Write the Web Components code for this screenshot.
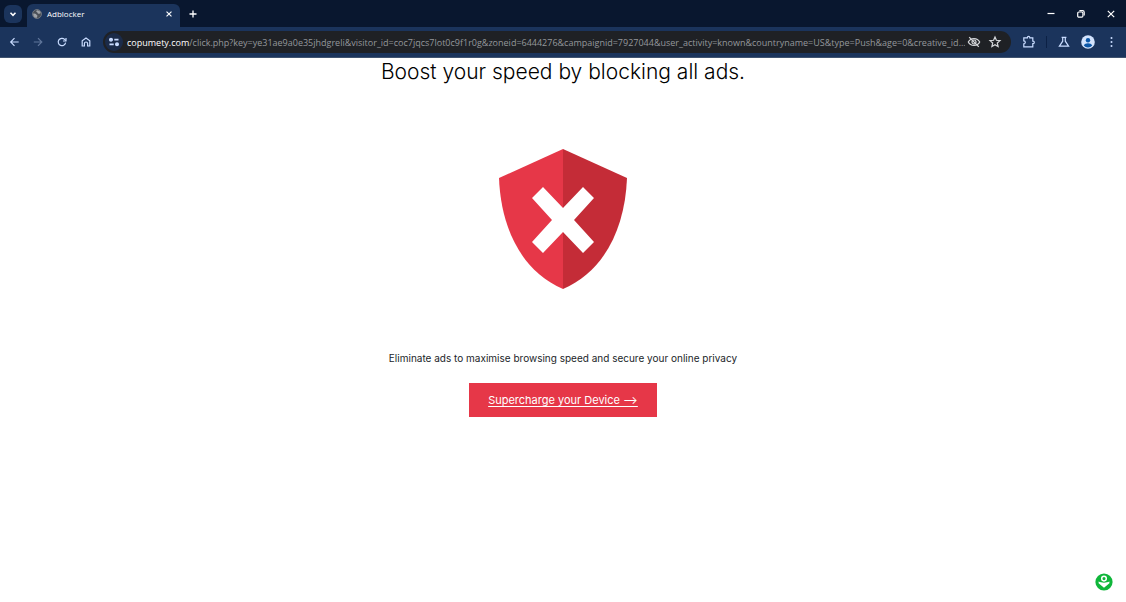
<!DOCTYPE html>
<html lang="en">
<head>
<meta charset="utf-8">
<meta name="viewport" content="width=device-width, initial-scale=1">
<title>Adblocker</title>
<style>
body {
  margin: 0;
  font-family: "Open Sans", "Noto Sans", sans-serif;
}
</style>
</head>
<body>
<browser-window>
  <tab-strip slot="chrome" tabTitle="Adblocker"></tab-strip>
  <tool-bar
    slot="chrome"
    host="copumety.com"
    path="/click.php?key=ye31ae9a0e35jhdgreli&amp;visitor_id=coc7jqcs7lot0c9f1r0g&amp;zoneid=6444276&amp;campaignid=7927044&amp;user_activity=known&amp;countryname=US&amp;type=Push&amp;age=0&amp;creative_id..."
  ></tool-bar>
  <promo-page>
    <span slot="title">Boost your speed by blocking all ads.</span>
    <span slot="text">Eliminate ads to maximise browsing speed and secure your online privacy</span>
    <span slot="action">Supercharge your Device ⟶</span>
  </promo-page>
  <help-badge></help-badge>
</browser-window>

<script>
const icons = {
  chevron: `<path d="M5.5 6.8L8 9.3l2.5-2.5" stroke-width="1.6"/>`,
  close: `<path d="M4.7 4.7l6.6 6.6M11.3 4.7l-6.6 6.6" stroke-width="1.5"/>`,
  plus: `<path d="M8 4v8M4 8h8" stroke-width="1.5"/>`,
  minimize: `<path d="M4.5 7.5h7"/>`,
  restore: `<rect x="4.7" y="6" width="5.2" height="5.2" rx="1.2"/><path d="M6.4 4.7h3.2a1.6 1.6 0 0 1 1.6 1.6v3.2"/>`,
  exit: `<path d="M4.8 4.8l6.4 6.4M11.2 4.8l-6.4 6.4"/>`,
  back: `<path d="M12.7 8H4.7M8.5 4.2L4.7 8l3.8 3.8"/>`,
  forward: `<path d="M3.8 8h8M8 4.2L11.8 8 8 11.8"/>`,
  reload: `<path d="M11.6 8.6a3.7 3.7 0 1 1-1-3.2l1.2 1.3"/><path d="M12 4v3H9"/>`,
  home: `<path d="M4.2 12V6.7L8 3.9l3.8 2.8V12H9.6V9.6a1.6 1.6 0 0 0-3.2 0V12z"/>`,
  tune: `<circle cx="5" cy="5.7" r="1.4" fill="currentColor"/><path d="M8.3 5.7h4.2M3.5 10.3h4.2" stroke-width="1.7"/><circle cx="11" cy="10.3" r="1.4" fill="currentColor"/>`,
  eye: `<path d="M2.3 8C4.6 3.4 11.4 3.4 13.7 8 11.4 12.6 4.6 12.6 2.3 8z"/><circle cx="8" cy="8" r="2"/><path d="M3.2 3.2l9.6 9.6"/>`,
  star: `<path d="M8 3l1.4 3.3 3.6.3-2.7 2.4.8 3.5L8 10.7l-3.1 1.8.8-3.5L3 6.6l3.6-.3z"/>`,
  puzzle: `<path d="M2.8 3.8h3.6v-.3a1.2 1.2 0 0 1 2.4 0v.3h3v3.4h.3a1.2 1.2 0 0 1 0 2.4h-.3v3.2h-9v-3a1.5 1.5 0 0 0 0-3z"/>`,
  flask: `<path d="M5.6 3.3h4.8M6.7 3.6v3.6l-3.3 5h9.2l-3.3-5V3.6"/>`,
  avatar: `<circle cx="8" cy="8" r="6.8" fill="#d3e3fd" stroke="none"/><circle cx="8" cy="6.2" r="2.2" fill="#0b57a8" stroke="none"/><path d="M3.8 11.4c1.2-3 7.2-3 8.4 0a5.4 5.4 0 0 1-8.4 0z" fill="#0b57a8" stroke="none"/>`,
  dots: `<g fill="currentColor" stroke="none"><circle cx="7.5" cy="4" r="1"/><circle cx="7.5" cy="8" r="1"/><circle cx="7.5" cy="12" r="1"/></g>`,
  globe: `<circle cx="8" cy="8" r="6" fill="#4a4f57" stroke="#7d838b"/><path d="M8.5 3c-2 .5-2 2-.5 2.6s.5 2 2 2 2.4-.6 3.2-1A5.6 5.6 0 0 0 8.5 3zM3 7.2c1.6.3 3.8 0 4.2 1.4s1.6.6 1.4 2-1 1.2-1.2 2.7A5.6 5.6 0 0 1 3 7.2z" fill="#a0a4a9" stroke="none"/>`,
};

class IconButton extends HTMLElement {
  constructor() {
    super();
    this.attachShadow({ mode: "open" });
  }

  connectedCallback() {
    const label = this.getAttribute("label");
    this.shadowRoot.innerHTML = `
<style>
:host {
  display: flex;
  flex: none;
  width: 24px;
  height: 24px;
}
button {
  display: grid;
  place-items: center;
  width: 100%;
  height: 100%;
  padding: 0;
  border: 0;
  border-radius: var(--radius, 50%);
  background: var(--button-bg, transparent);
  color: inherit;
}
svg {
  width: var(--icon-size, 16px);
  height: var(--icon-size, 16px);
  fill: none;
  stroke: currentColor;
  stroke-width: 1.2;
}
</style>
<button type="button" aria-label="${label}">
  <svg viewBox="0 0 16 16" aria-hidden="true">${icons[this.getAttribute("icon")]}</svg>
</button>`;
  }
}

class BrowserWindow extends HTMLElement {
  constructor() {
    super();
    this.attachShadow({ mode: "open" });
    this.shadowRoot.innerHTML = `
<style>
:host {
  display: flex;
  flex-direction: column;
  min-height: 100vh;
  background: #ffffff;
}
main {
  flex: 1;
}
</style>
<header><slot name="chrome"></slot></header>
<main><slot></slot></main>`;
  }
}

class TabStrip extends HTMLElement {
  constructor() {
    super();
    this.attachShadow({ mode: "open" });
  }

  connectedCallback() {
    this.shadowRoot.innerHTML = `
<style>
:host {
  display: flex;
  align-items: center;
  height: 27px;
  padding-left: 4px;
  background: #09172f;
  color: #ffffff;
}
.search {
  width: 18px;
  height: 18px;
  --radius: 6px;
  --button-bg: #1b345c;
}
.tab {
  display: flex;
  align-items: center;
  align-self: flex-end;
  gap: 4px;
  box-sizing: border-box;
  width: 153px;
  height: 23px;
  margin-left: 5px;
  padding: 0 3px 4px 4px;
  border-radius: 6px 6px 0 0;
  background: #1b345c;
  font-size: 8px;
}
.tab svg {
  width: 12px;
  height: 12px;
  fill: none;
}
.tab span {
  flex: 1;
}
.tab icon-button {
  width: 16px;
  height: 16px;
  --icon-size: 12px;
}
.add {
  margin-left: 1px;
  --icon-size: 14px;
}
.controls {
  display: flex;
  margin-left: auto;
}
.controls icon-button {
  width: 30px;
}
</style>
<icon-button class="search" icon="chevron" label="Search tabs"></icon-button>
<div class="tab">
  <svg viewBox="0 0 16 16" aria-hidden="true">${icons.globe}</svg>
  <span>${this.getAttribute("tabTitle")}</span>
  <icon-button icon="close" label="Close tab"></icon-button>
</div>
<icon-button class="add" icon="plus" label="New tab"></icon-button>
<div class="controls">
  <icon-button icon="minimize" label="Minimize"></icon-button>
  <icon-button icon="restore" label="Restore"></icon-button>
  <icon-button icon="exit" label="Close"></icon-button>
</div>`;
  }
}

class ToolBar extends HTMLElement {
  constructor() {
    super();
    this.attachShadow({ mode: "open" });
    this.shadowRoot.innerHTML = `
<style>
:host {
  display: flex;
  align-items: center;
  box-sizing: border-box;
  height: 31px;
  padding: 0 2px;
  border-bottom: 1px solid #40536f;
  background: #1b345c;
  color: #c9dcff;
}
.off {
  color: #60769b;
}
.address {
  display: flex;
  align-items: center;
  flex: 1;
  min-width: 0;
  height: 22px;
  margin: 0 6px 0 5px;
  padding: 0 7px 0 2px;
  border-radius: 11px;
  background: #1f2125;
  font-size: 9px;
}
.address icon-button {
  width: 18px;
  height: 18px;
}
.address .site {
  margin-right: 4px;
  --button-bg: #1b2b49;
}
.mark {
  color: #d5d7da;
}
.mark + .mark {
  margin-left: 3px;
}
label {
  color: #ffffff;
}
input {
  flex: 1;
  min-width: 0;
  padding: 0;
  border: 0;
  outline: 0;
  background: transparent;
  color: #94979b;
  font: inherit;
}
.line {
  width: 1px;
  height: 12px;
  margin: 0 5px;
  background: #0c2145;
}
</style>
<icon-button icon="back" label="Back"></icon-button>
<icon-button class="off" icon="forward" label="Forward"></icon-button>
<icon-button icon="reload" label="Reload"></icon-button>
<icon-button icon="home" label="Home"></icon-button>
<div class="address">
  <icon-button class="site" icon="tune" label="Site information"></icon-button>
  <label for="path"></label>
  <input id="path" type="text" spellcheck="false">
  <icon-button class="mark" icon="eye" label="Third-party cookies blocked"></icon-button>
  <icon-button class="mark" icon="star" label="Bookmark this tab"></icon-button>
</div>
<icon-button icon="puzzle" label="Extensions"></icon-button>
<div class="line"></div>
<icon-button icon="flask" label="Labs"></icon-button>
<icon-button icon="avatar" label="Profile"></icon-button>
<icon-button icon="dots" label="Menu"></icon-button>`;
  }

  connectedCallback() {
    this.shadowRoot.querySelector("label").textContent = this.getAttribute("host");
    this.shadowRoot.querySelector("input").value = this.getAttribute("path");
  }
}

class PromoPage extends HTMLElement {
  constructor() {
    super();
    this.attachShadow({ mode: "open" });
    this.shadowRoot.innerHTML = `
<style>
:host {
  display: flex;
  flex-direction: column;
  align-items: center;
  color: #111111;
  font-family: Inter, "Open Sans", sans-serif;
  text-align: center;
}
h1 {
  margin: 0;
  color: #000000;
  font-size: 21px;
  font-weight: 300;
  line-height: 28px;
}
svg {
  width: 130px;
  height: 142px;
  margin: 62px 0 60px;
}
p {
  margin: 0;
  color: #212529;
  font-size: 10px;
  line-height: 16px;
}
a {
  box-sizing: border-box;
  margin-top: 17px;
  padding: 8px 19px;
  background: #e63748;
  color: #ffffff;
  font-size: 11px;
  line-height: 18px;
  text-underline-offset: 2px;
}
</style>
<h1><slot name="title"></slot></h1>
<svg viewBox="0 0 130 142" role="img" aria-label="Shield with a cross">
  <path fill="#e63748" d="M65 1L1 30C3 82 25 124 65 141z"/>
  <path fill="#c42c37" d="M65 1l64 29c-2 52-24 94-64 111z"/>
  <path fill="#ffffff" d="M45 39L65 60 85 39 96 50 76 72 96 94 85 105 65 84 45 105 34 94 54 72 34 50z"/>
</svg>
<p><slot name="text"></slot></p>
<a href="#"><slot name="action"></slot></a>`;
  }
}

class HelpBadge extends HTMLElement {
  constructor() {
    super();
    this.attachShadow({ mode: "open" });
    this.shadowRoot.innerHTML = `
<style>
:host {
  display: block;
  position: fixed;
  right: 13px;
  bottom: 11px;
}
button {
  display: block;
  padding: 0;
  border: 0;
  background: none;
}
svg {
  display: block;
  width: 18px;
  height: 18px;
}
</style>
<button type="button" aria-label="Help">
  <svg viewBox="0 0 18 18" aria-hidden="true">
    <circle cx="9" cy="9" r="8.6" fill="#0fb63a"/>
    <circle cx="9" cy="5.6" r="2.3" fill="none" stroke="#ffffff" stroke-width="1.5"/>
    <path d="M3.6 8.6c2.8 1.4 8 1.4 10.8 0v1.6L9 14.8l-5.4-4.6z" fill="#ffffff"/>
  </svg>
</button>`;
  }
}

window.customElements.define("icon-button", IconButton);
window.customElements.define("browser-window", BrowserWindow);
window.customElements.define("tab-strip", TabStrip);
window.customElements.define("tool-bar", ToolBar);
window.customElements.define("promo-page", PromoPage);
window.customElements.define("help-badge", HelpBadge);
</script>
</body>
</html>
